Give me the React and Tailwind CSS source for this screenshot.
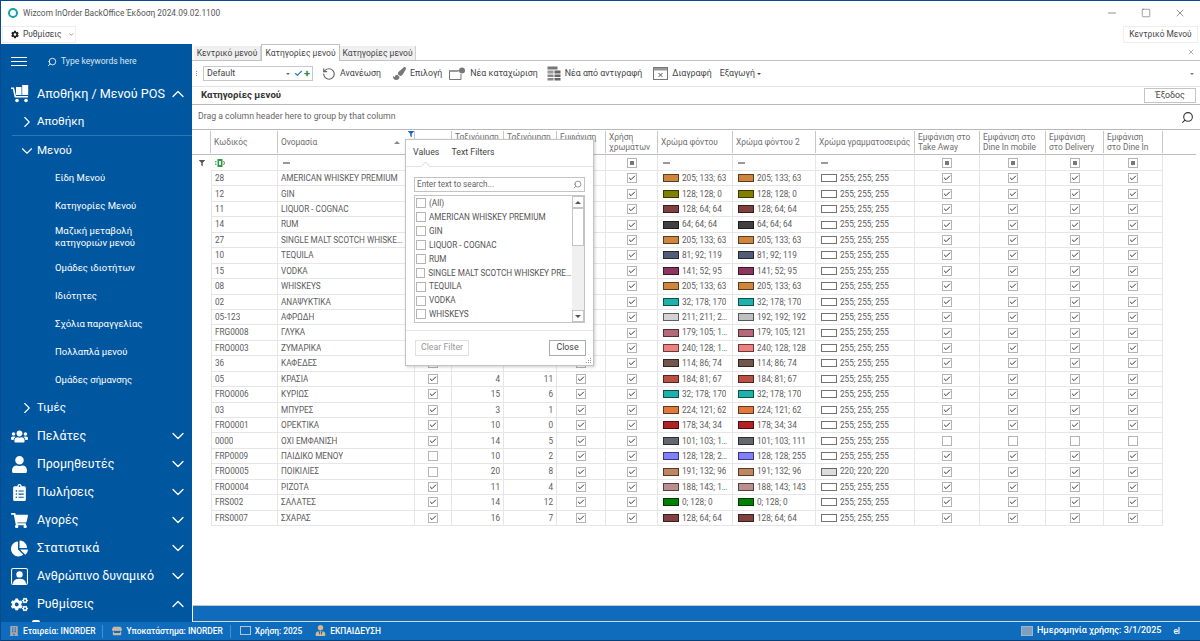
import { ChevronDown, ChevronRight, ChevronUp, Search, Minus, Square, X, Check, RotateCcw } from 'lucide-react';
import { FaCog, FaCogs, FaUsers, FaUser, FaClipboardList, FaShoppingCart, FaChartPie, FaFilter, FaBuilding, FaStore, FaUserTie, FaPaintBrush } from 'react-icons/fa';
import { BsPersonSquare } from 'react-icons/bs';

const gridCols = 'grid grid-cols-[19px_67px_137px_37px_52px_53px_49px_52px_75px_83px_99px_65px_66px_58px_59px]';

const menuItems = ['Είδη Μενού', 'Κατηγορίες Μενού', 'Μαζική μεταβολή κατηγοριών μενού', 'Ομάδες ιδιοτήτων', 'Ιδιότητες', 'Σχόλια παραγγελίας', 'Πολλαπλά μενού', 'Ομάδες σήμανσης'];

const sections = [
  { label: 'Πελάτες', Icon: FaUsers },
  { label: 'Προμηθευτές', Icon: FaUser },
  { label: 'Πωλήσεις', Icon: FaClipboardList },
  { label: 'Αγορές', Icon: FaShoppingCart },
  { label: 'Στατιστικά', Icon: FaChartPie },
  { label: 'Ανθρώπινο δυναμικό', Icon: BsPersonSquare },
  { label: 'Ρυθμίσεις', Icon: FaCogs, open: true },
];

const headers = [
  ['Κωδικός'], ['Ονομασία'], [''], ['Ταξινόμηση', 'POS'], ['Ταξινόμηση', 'Mobile'], ['Εμφάνιση', 'στο POS'], ['Χρήση', 'χρωμάτων'],
  ['Χρώμα φόντου'], ['Χρώμα φόντου 2'], ['Χρώμα γραμματοσειράς'], ['Εμφάνιση στο', 'Take Away'], ['Εμφάνιση στο', 'Dine In mobile'], ['Εμφάνιση', 'στο Delivery'], ['Εμφάνιση', 'στο Dine In'],
];

// code, name, back colour, back colour 2, show, sort 1, sort 2, font colour, channels on
const rows = [
  ['28', 'AMERICAN WHISKEY PREMIUM', '205; 133; 63', '205; 133; 63'],
  ['12', 'GIN', '128; 128; 0', '128; 128; 0'],
  ['11', 'LIQUOR - COGNAC', '128; 64; 64', '128; 64; 64'],
  ['14', 'RUM', '64; 64; 64', '64; 64; 64'],
  ['27', 'SINGLE MALT SCOTCH WHISKEY PREMIUM', '205; 133; 63', '205; 133; 63'],
  ['10', 'TEQUILA', '81; 92; 119', '81; 92; 119'],
  ['15', 'VODKA', '141; 52; 95', '141; 52; 95'],
  ['08', 'WHISKEYS', '205; 133; 63', '205; 133; 63'],
  ['02', 'ΑΝΑΨΥΚΤΙΚΑ', '32; 178; 170', '32; 178; 170'],
  ['05-123', 'ΑΦΡΩΔΗ', '211; 211; 211', '192; 192; 192'],
  ['FRG0008', 'ΓΛΥΚΑ', '179; 105; 121', '179; 105; 121'],
  ['FRO0003', 'ΖΥΜΑΡΙΚΑ', '240; 128; 128', '240; 128; 128'],
  ['36', 'ΚΑΦΕΔΕΣ', '114; 86; 74', '114; 86; 74', true, '', ''],
  ['05', 'ΚΡΑΣΙΑ', '184; 81; 67', '184; 81; 67', true, 4, 11],
  ['FRO0006', 'ΚΥΡΙΩΣ', '32; 178; 170', '32; 178; 170', true, 15, 6],
  ['03', 'ΜΠΥΡΕΣ', '224; 121; 62', '224; 121; 62', true, 3, 1],
  ['FRO0001', 'ΟΡΕΚΤΙΚΑ', '178; 34; 34', '178; 34; 34', true, 10, 0],
  ['0000', 'ΟΧΙ ΕΜΦΑΝΙΣΗ', '101; 103; 111', '101; 103; 111', true, 14, 5, '255; 255; 255', false],
  ['FRP0009', 'ΠΑΙΔΙΚΟ ΜΕΝΟΥ', '128; 128; 255', '128; 128; 255', false, 10, 2],
  ['FRO0005', 'ΠΟΙΚΙΛΙΕΣ', '191; 132; 96', '191; 132; 96', false, 20, 8, '220; 220; 220'],
  ['FRO0004', 'ΡΙΖΟΤΑ', '188; 143; 143', '188; 143; 143', true, 11, 4],
  ['FRS002', 'ΣΑΛΑΤΕΣ', '0; 128; 0', '0; 128; 0', true, 14, 12],
  ['FRS0007', 'ΣΧΑΡΑΣ', '128; 64; 64', '128; 64; 64', true, 16, 7],
];

const filterValues = ['(All)', 'AMERICAN WHISKEY PREMIUM', 'GIN', 'LIQUOR - COGNAC', 'RUM', 'SINGLE MALT SCOTCH WHISKEY PREMIUM', 'TEQUILA', 'VODKA', 'WHISKEYS'];

const Box = ({ checked }) => (
  <span className="flex h-[10px] w-[10px] items-center justify-center border border-[#b4b4b4] bg-white">
    {checked && <Check size={8} strokeWidth={3} className="text-[#333]" />}
  </span>
);

const FilterBox = () => (
  <span className="flex h-[10px] w-[10px] items-center justify-center border border-[#b4b4b4] bg-white">
    <span className="h-[4px] w-[4px] bg-[#777]" />
  </span>
);

const Dash = () => <span className="ml-[5px] h-[2px] w-[7px] bg-[#999]" />;

const Swatch = ({ value }) => (
  <div className="flex min-w-0 items-center gap-[3px] pl-[5px] pr-[4px]">
    <span
      className="h-[8px] w-[16px] shrink-0 border border-[#0000008c]"
      style={{ backgroundColor: `rgb(${value.replaceAll(';', ',')})` }}
    />
    <span className="truncate">{value}</span>
  </div>
);

const Cell = ({ children, className = '' }) => (
  <div className={`flex min-w-0 items-center border-r border-b border-[#e6e6e6] ${className}`}>{children}</div>
);

const ToolButton = ({ icon, label, className = '' }) => (
  <div className={`flex items-center gap-[4px] whitespace-nowrap ${className}`}>
    {icon}
    <span>{label}</span>
  </div>
);

const TableIcon = () => (
  <svg width="14" height="15" viewBox="0 0 14 15" fill="none">
    <rect x="0.5" y="0.5" width="10" height="3" fill="#777" />
    <rect x="0.5" y="4.5" width="6" height="3" fill="#999" />
    <rect x="7.5" y="4.5" width="6" height="3" fill="#666" />
    <rect x="0.5" y="8.5" width="6" height="2.5" fill="#888" />
    <rect x="7.5" y="8.5" width="6" height="2.5" fill="#666" />
    <rect x="0.5" y="12" width="6" height="2.5" fill="#888" />
    <rect x="7.5" y="12" width="6" height="2.5" fill="#666" />
  </svg>
);

const NewIcon = () => (
  <svg width="17" height="13" viewBox="0 0 17 13" fill="none">
    <path d="M10 3.5H0.5V12.5H12V7" stroke="#777" />
    <rect x="0.5" y="3" width="9" height="2" fill="#999" />
    <circle cx="13" cy="3.5" r="3" fill="#777" />
  </svg>
);

const DeleteIcon = () => (
  <svg width="15" height="13" viewBox="0 0 15 13" fill="none">
    <rect x="0.5" y="0.5" width="14" height="12" stroke="#777" />
    <rect x="1" y="1" width="13" height="2.5" fill="#999" />
    <path d="M5.5 6l4 4M9.5 6l-4 4" stroke="#555" />
  </svg>
);

const ExcelIcon = () => (
  <svg width="10" height="8" viewBox="0 0 10 8" className="ml-[4px]">
    <rect x="2.5" y="0" width="5" height="8" fill="#2e9b45" />
    <rect x="4" y="2" width="2" height="4" fill="#e8f5ea" />
    <rect x="0" y="2" width="1.5" height="1.5" fill="#5bb56f" />
    <rect x="0" y="4.5" width="1.5" height="1.5" fill="#5bb56f" />
    <path d="M8.5 2l1 2-1 2" stroke="#555" strokeWidth="0.8" fill="none" />
  </svg>
);

const CartBoxes = () => (
  <svg width="20" height="18" viewBox="0 0 20 18" fill="white">
    <path d="M0 2.5h3l2 8.5h12v1.6H3.7L1.8 4H0z" />
    <rect x="5" y="2" width="5.5" height="8" />
    <rect x="11.2" y="0" width="6" height="10" />
    <circle cx="6" cy="15.5" r="1.8" />
    <circle cx="15" cy="15.5" r="1.8" />
  </svg>
);

const Sidebar = () => (
  <aside className="flex w-[191px] shrink-0 flex-col overflow-hidden bg-[#01579f] text-white">
    <div className="flex h-[36px] shrink-0 items-center pb-[1px]">
      <div className="ml-[10px] flex w-[16px] flex-col gap-[3px]">
        <span className="h-px bg-white" />
        <span className="h-px bg-white" />
        <span className="h-px bg-white" />
      </div>
      <Search size={10} className="ml-[20px] -scale-x-100" />
      <span className="ml-[4px] text-[8.6px] text-[#dbe8f3]">Type keywords here</span>
    </div>
    <div className="flex h-7 shrink-0 items-center whitespace-nowrap text-[12.6px]">
      <span className="ml-[10px] flex w-[26px]"><CartBoxes /></span>
      <span>Αποθήκη / Μενού POS</span>
      <ChevronUp size={20} strokeWidth={1.5} className="ml-auto mr-[4px]" />
    </div>
    <div className="ml-[11px] flex h-7 shrink-0 items-center border-b border-[#2e78b5] pt-[1px] text-[11.6px]">
      <ChevronRight size={18} strokeWidth={1.5} className="ml-[6px] mr-[1px]" />
      <span>Αποθήκη</span>
    </div>
    <div className="flex h-7 shrink-0 items-center pt-[1px] text-[11.6px]">
      <ChevronDown size={18} strokeWidth={1.5} className="ml-[17px] mr-[1px]" />
      <span>Μενού</span>
    </div>
    {menuItems.map((item, i) => (
      <div key={item} className={`flex shrink-0 items-center pl-[54px] pr-[30px] text-[9.5px] leading-[12px] ${i === 2 ? 'h-[34px]' : 'h-7'}`}>
        {item}
      </div>
    ))}
    <div className="flex h-7 shrink-0 items-center text-[11.6px]">
      <ChevronRight size={18} strokeWidth={1.5} className="ml-[17px] mr-[1px]" />
      <span>Τιμές</span>
    </div>
    {sections.map(({ label, Icon, open }) => (
      <div key={label} className="flex h-7 shrink-0 items-center whitespace-nowrap text-[12.4px]">
        <span className="ml-[10px] flex w-[26px]"><Icon size={17} /></span>
        <span>{label}</span>
        {open ? <ChevronUp size={20} strokeWidth={1.5} className="ml-auto mr-[4px]" /> : <ChevronDown size={20} strokeWidth={1.5} className="ml-auto mr-[4px]" />}
      </div>
    ))}
    <span className="ml-[31px] mt-[2px] h-[2px] w-[8px] shrink-0 rounded-t-full bg-white" />
  </aside>
);

const FilterPopup = () => (
  <div className="absolute left-[404px] top-[138px] z-20 flex h-[227px] w-[189px] flex-col border border-[#c4c4c4] bg-white text-[8.2px] text-[#555] shadow-[1px_1px_3px_#0003]">
    <div className="relative flex h-[27px] shrink-0 items-center gap-[12px] border-b border-[#e4e4e4] pl-[7px]">
      <span className="text-[8.8px] text-[#444]">Values</span>
      <span className="text-[8.8px] text-[#444]">Text Filters</span>
      <span className="absolute -bottom-[4px] left-[16px] h-[7px] w-[7px] rotate-45 border-l border-t border-[#e4e4e4] bg-white" />
    </div>
    <div className="mx-[8px] mt-[10px] flex h-[15px] shrink-0 items-center justify-between border border-[#c4c4c4] px-[2px] text-[#666]">
      <span>Enter text to search...</span>
      <Search size={9} className="-scale-x-100 text-[#777]" />
    </div>
    <div className="mx-[8px] mt-[3px] flex h-[128px] shrink-0 border border-[#c4c4c4]">
      <div className="min-w-0 flex-1 pl-[1px]">
        {filterValues.map((value) => (
          <div key={value} className="flex h-[13.95px] items-center gap-[2px]">
            <Box />
            <span className="truncate pl-[1px]">{value}</span>
          </div>
        ))}
      </div>
      <div className="flex w-[12px] shrink-0 flex-col justify-between bg-[#f0f0f0]">
        <span className="flex h-[12px] items-center justify-center border border-[#c4c4c4] bg-white">
          <span className="border-x-[3px] border-b-[3px] border-x-transparent border-b-[#555]" />
        </span>
        <span className="mb-auto h-[38px] border border-[#c4c4c4] bg-white" />
        <span className="flex h-[12px] items-center justify-center border border-[#c4c4c4] bg-white">
          <span className="border-x-[3px] border-t-[3px] border-x-transparent border-t-[#555]" />
        </span>
      </div>
    </div>
    <div className="mt-[7px] border-t border-[#e4e4e4]" />
    <div className="mt-[9px] flex items-center justify-between pl-[9px] pr-[7px] text-[8.8px]">
      <span className="flex h-[16px] w-[54px] items-center justify-center border border-[#e0e0e0] text-[#999]">Clear Filter</span>
      <span className="flex h-[16px] w-[37px] items-center justify-center border border-[#aaa] text-[#444]">Close</span>
    </div>
    <div className="absolute bottom-[2px] right-[2px] grid grid-cols-3 gap-px">
      <span /><span /><span className="h-px w-px bg-[#999]" />
      <span /><span className="h-px w-px bg-[#999]" /><span className="h-px w-px bg-[#999]" />
      <span className="h-px w-px bg-[#999]" /><span className="h-px w-px bg-[#999]" /><span className="h-px w-px bg-[#999]" />
    </div>
  </div>
);

const DataGrid = () => (
  <div className="min-h-0 flex-1 overflow-hidden bg-white text-[8.2px] text-[#5c5c5c]">
    <div className={`${gridCols} h-[25px] w-[1004px] border-b border-[#bdbdbd] pr-[33px]`}>
      <div className="my-[1px] border-r border-[#c8c8c8]" />
      {headers.map((lines, i) => (
        <div key={i} className="relative my-[1px] flex flex-col justify-center overflow-hidden whitespace-nowrap border-r border-[#c8c8c8] pl-[3px] text-[8.4px] leading-[10px] text-[#6e6e6e]">
          {lines.map((line) => <span key={line}>{line}</span>)}
          {i === 1 && <span className="absolute right-[14px] top-[10px] border-x-[3px] border-b-[3px] border-x-transparent border-b-[#888]" />}
        </div>
      ))}
    </div>
    <div className={`${gridCols} h-[16px]`}>
      <div className="flex items-center justify-center">
        <FaFilter size={6} className="text-[#555]" />
      </div>
      <Cell><ExcelIcon /></Cell>
      <Cell><Dash /></Cell>
      <Cell /><Cell /><Cell /><Cell />
      <Cell className="justify-center"><FilterBox /></Cell>
      <Cell><Dash /></Cell><Cell><Dash /></Cell><Cell><Dash /></Cell>
      {[0, 1, 2, 3].map((n) => <Cell key={n} className="justify-center"><FilterBox /></Cell>)}
    </div>
    {rows.map(([code, name, back, back2, show = true, sort1 = '', sort2 = '', font = '255; 255; 255', channels = true]) => (
      <div key={code} className={`${gridCols} h-[15.45px]`}>
        <div />
        <Cell className="border-l pl-[3px]"><span className="truncate">{code}</span></Cell>
        <Cell className="pl-[3px] pr-[9px]"><span className="truncate">{name}</span></Cell>
        <Cell className="justify-center"><Box checked={show} /></Cell>
        <Cell className="justify-end pr-[3px]">{sort1}</Cell>
        <Cell className="justify-end pr-[3px]">{sort2}</Cell>
        <Cell className="justify-center"><Box checked /></Cell>
        <Cell className="justify-center"><Box checked /></Cell>
        <Cell><Swatch value={back} /></Cell>
        <Cell><Swatch value={back2} /></Cell>
        <Cell><Swatch value={font} /></Cell>
        {[0, 1, 2, 3].map((n) => <Cell key={n} className="justify-center"><Box checked={channels} /></Cell>)}
      </div>
    ))}
  </div>
);

const StatusItem = ({ icon, label, className = '' }) => (
  <div className={`flex items-center gap-[4px] ${className}`}>
    {icon}
    <span>{label}</span>
  </div>
);

export default function App() {
  return (
    <div className="relative flex h-[641px] w-[1200px] flex-col overflow-hidden border-l border-t border-[#0b4a8f] bg-white font-['Roboto','Noto_Sans',sans-serif] text-[8.4px] text-[#444]">
      <div className="flex h-[24px] shrink-0 items-center pl-[7px]">
        <span className="h-[10px] w-[10px] rounded-full border-2 border-[#17a0a8]" />
        <span className="ml-[5px] text-[8.35px] text-[#555]">Wizcom InOrder BackOffice Έκδοση 2024.09.02.1100</span>
        <div className="ml-auto flex items-center gap-[23px] pr-[14px] text-[#444]">
          <Minus size={12} strokeWidth={1.2} />
          <Square size={10} strokeWidth={1.2} />
          <X size={12} strokeWidth={1.2} />
        </div>
      </div>
      <div className="flex h-[19px] shrink-0 items-center justify-between pl-[1px] pr-[2px]">
        <div className="flex h-[17px] w-[74px] items-center gap-[4px] border border-[#eeeeee] pl-[8px]">
          <FaCog size={11} className="text-[#222]" />
          <span>Ρυθμίσεις</span>
          <ChevronDown size={9} className="ml-[3px]" />
        </div>
        <div className="flex h-[17px] w-[75px] items-center justify-center border border-[#eeeeee]">Κεντρικό Μενού</div>
      </div>
      <div className="flex min-h-0 flex-1">
        <Sidebar />
        <main className="flex min-w-0 flex-1 flex-col bg-white">
          <div className="relative flex h-[17px] shrink-0 items-end whitespace-nowrap border-b border-[#c2c2c2] pl-[2px] text-[8.5px]">
            <span className="flex h-[14px] w-[67px] items-center justify-center border-r border-[#d0d0d0] bg-[#f0f0f0]">Κεντρικό μενού</span>
            <span className="relative -mb-px flex h-[17px] w-[79px] items-center justify-center border-x border-t border-[#c2c2c2] bg-white">Κατηγορίες μενού</span>
            <span className="flex h-[14px] w-[76px] items-center justify-center border-r border-[#d0d0d0] bg-[#f0f0f0]">Κατηγορίες μενού</span>
            <X size={8} className="ml-auto mr-[5px] self-center text-[#888]" />
          </div>
          <div className="flex h-[26px] shrink-0 items-center border-b border-[#e2e2e2] pl-[4px] pr-[6px] text-[8.8px]">
            <span className="mr-[6px] flex flex-col gap-px">
              <span className="h-px w-px bg-[#888]" />
              <span className="h-px w-px bg-[#888]" />
              <span className="h-px w-px bg-[#888]" />
            </span>
            <div className="flex h-[15px] w-[110px] items-center border border-[#c8c8c8] pl-[3px] pr-[2px]">
              <span>Default</span>
              <span className="ml-auto mr-[4px] border-x-[2px] border-t-[2px] border-x-transparent border-t-[#666]" />
              <Check size={9} strokeWidth={3} className="text-[#1f7fc4]" />
              <span className="ml-[1px] text-[11px] font-bold leading-none text-[#2e8b3c]">+</span>
            </div>
            <div className="ml-[9px] flex items-center">
              <ToolButton icon={<RotateCcw size={14} className="text-[#666]" />} label="Ανανέωση" />
              <ToolButton className="ml-[12px]" icon={<FaPaintBrush size={13} className="text-[#777]" />} label="Επιλογή" />
              <ToolButton className="ml-[7px]" icon={<NewIcon />} label="Νέα καταχώριση" />
              <ToolButton className="ml-[9px]" icon={<TableIcon />} label="Νέα από αντιγραφή" />
              <ToolButton className="ml-[11px]" icon={<DeleteIcon />} label="Διαγραφή" />
              <div className="ml-[8px] flex items-center gap-[2px]">
                <span>Εξαγωγή</span>
                <span className="border-x-[2px] border-t-[2px] border-x-transparent border-t-[#444]" />
              </div>
            </div>
            <span className="ml-auto border-x-[2px] border-t-[2px] border-x-transparent border-t-[#777]" />
          </div>
          <div className="flex h-[18px] shrink-0 items-center justify-between border-b border-[#b8b8b8] pl-[9px] pr-[4px] text-[9.6px]">
            <span className="font-bold text-[#333]">Κατηγορίες μενού</span>
            <span className="flex h-[15px] w-[52px] items-center justify-center border border-[#c4c4c4] text-[8.8px]">Έξοδος</span>
          </div>
          <div className="flex h-[25px] shrink-0 items-center justify-between border-b border-[#b8b8b8] px-[6px] text-[8.7px] text-[#666]">
            <span>Drag a column header here to group by that column</span>
            <Search size={13} strokeWidth={2} className="-scale-x-100 text-[#333]" />
          </div>
          <DataGrid />
          <div className="h-[17px] shrink-0 border-l border-t border-b border-l-white border-t-[#c4c4c4] border-b-[#d8d8d8] bg-[#0f6cbd]" />
        </main>
      </div>
      <div className="flex h-[19px] shrink-0 items-center border-b border-[#0b3f73] bg-[#0f6cbd] pl-[8px] pr-[6px] text-[8.4px] font-medium text-white">
        <StatusItem icon={<FaBuilding size={10} className="text-[#a9a9a9]" />} label="Εταιρεία: INORDER" />
        <span className="ml-[7px] mr-[9px] h-[13px] border-r border-[#4b90cc]" />
        <StatusItem icon={<FaStore size={10} className="text-[#c9b8a0]" />} label="Υποκατάστημα: INORDER" />
        <span className="ml-[7px] mr-[9px] h-[13px] border-r border-[#4b90cc]" />
        <StatusItem icon={<span className="h-[9px] w-[11px] border border-[#b5c4d4]" />} label="Χρήση: 2025" className="mr-[13px]" />
        <StatusItem icon={<FaUserTie size={11} className="text-[#d9b98c]" />} label="ΕΚΠΑΙΔΕΥΣΗ" />
        <span className="ml-auto mr-[4px] h-[10px] w-[12px] border border-[#9fb4c8] bg-[#7f9fbd]" />
        <span className="text-[9px]">Ημερομηνία χρήσης: 3/1/2025</span>
        <span className="ml-[12px] mr-[14px]">el</span>
      </div>
      <FilterPopup />
      <FaFilter size={6} className="absolute left-[407px] top-[130px] z-30 text-[#1565c0]" />
    </div>
  );
}
